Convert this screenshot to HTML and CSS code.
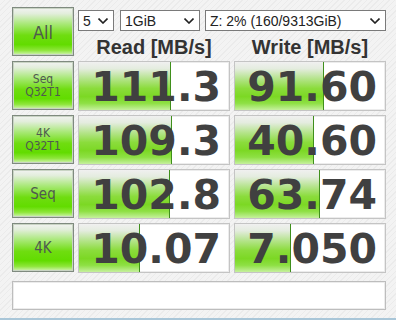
FILE: index.html
```html
<!DOCTYPE html>
<html>
<head>
<meta charset="utf-8">
<link rel="stylesheet" href="styles.css">
</head>
<body>
<div class="app">
  <div class="grid">
    <div class="btn btn-all">All</div>
    <div class="top">
      <div class="selects">
        <div class="sel sel-n"><span>5</span><svg class="chev" width="10" height="6" viewBox="0 0 10 6"><path d="M0.5 0.5 L5 5 L9.5 0.5" fill="none" stroke="#222" stroke-width="1.6"/></svg></div>
        <div class="sel sel-s"><span>1GiB</span><svg class="chev" width="10" height="6" viewBox="0 0 10 6"><path d="M0.5 0.5 L5 5 L9.5 0.5" fill="none" stroke="#222" stroke-width="1.6"/></svg></div>
        <div class="sel sel-d"><span>Z: 2% (160/9313GiB)</span><svg class="chev" width="10" height="6" viewBox="0 0 10 6"><path d="M0.5 0.5 L5 5 L9.5 0.5" fill="none" stroke="#222" stroke-width="1.6"/></svg></div>
      </div>
      <div class="heads">
        <div class="head">Read [MB/s]</div>
        <div class="head">Write [MB/s]</div>
      </div>
    </div>

    <div class="btn"><span>Seq</span><span>Q32T1</span></div>
    <div class="cell"><div class="bar" style="width:91px"></div><span class="val">111.3</span></div>
    <div class="cell"><div class="bar" style="width:88px"></div><span class="val">91.60</span></div>

    <div class="btn"><span>4K</span><span>Q32T1</span></div>
    <div class="cell"><div class="bar" style="width:92px"></div><span class="val">109.3</span></div>
    <div class="cell"><div class="bar" style="width:78px"></div><span class="val">40.60</span></div>

    <div class="btn btn-seq"><span>Seq</span></div>
    <div class="cell"><div class="bar" style="width:90px"></div><span class="val">102.8</span></div>
    <div class="cell"><div class="bar" style="width:84px"></div><span class="val">63.74</span></div>

    <div class="btn btn-4k"><span>4K</span></div>
    <div class="cell"><div class="bar" style="width:60px"></div><span class="val">10.07</span></div>
    <div class="cell"><div class="bar" style="width:55px"></div><span class="val">7.050</span></div>
  </div>
  <div class="comment"></div>
</div>
<div class="edge"></div>
</body>
</html>
```
FILE: styles.css
```css
html, body {
  margin: 0;
  padding: 0;
}
body {
  width: 396px;
  height: 320px;
  overflow: hidden;
  background-color: #f1f1f1;
  background-image: repeating-linear-gradient(135deg, #f3f3f3 0px, #f3f3f3 3px, #ebebeb 3px, #ebebeb 4px);
  display: flex;
  flex-direction: column;
}
.app {
  padding: 7px 10px 0 12px;
  flex: 1;
}
.grid {
  display: grid;
  grid-template-columns: 62px 152px 152px;
  grid-template-rows: repeat(5, 50px);
  column-gap: 4px;
  row-gap: 4px;
}
.btn {
  box-sizing: border-box;
  height: 49px;
  border: 1px solid #7f8a7f;
  box-shadow: inset 0 0 0 1px #c9d4c4;
  background: linear-gradient(to bottom, #f2f2f2 0%, #e2eedb 12%, #a6e873 35%, #6fdd10 58%, #62dc00 78%, #8ee63a 90%, #d4f4b8 100%);
  display: flex;
  flex-direction: column;
  align-items: center;
  justify-content: center;
  font-family: "Liberation Sans Narrow", "DejaVu Sans Condensed", sans-serif;
  font-size: 12px;
  line-height: 13px;
  color: #4f5a4f;
}
.btn-all {
  font-size: 18px;
  line-height: 20px;
  padding-top: 2px;
}
.btn-seq span, .btn-4k span {
  font-size: 15px;
  line-height: 16px;
}
.top {
  grid-column: 2 / 4;
  display: flex;
  flex-direction: column;
  justify-content: space-between;
  padding-top: 3px;
}
.selects {
  display: flex;
  gap: 6px;
}
.sel {
  box-sizing: border-box;
  height: 21px;
  border: 1px solid #7a7a7a;
  background: #fff;
  display: flex;
  align-items: center;
  justify-content: space-between;
  padding: 0 4px 0 4px;
  font-family: "Liberation Sans", Arial, sans-serif;
  font-size: 14px;
  color: #222;
}
.sel-n { width: 36px; }
.sel-s { width: 80px; }
.sel-d { width: 181px; margin-left: -1px; }
.chev { flex: none; margin-right: 1px; margin-top: 1px; }
.heads {
  display: grid;
  grid-template-columns: 152px 152px;
  column-gap: 4px;
}
.head {
  text-align: center;
  font-family: "Liberation Sans", Arial, sans-serif;
  font-weight: bold;
  font-size: 20px;
  line-height: 22px;
  color: #333;
  margin-bottom: -1px;
}
.cell {
  position: relative;
  box-sizing: border-box;
  height: 50px;
  border: 1px solid #c4c4c4;
  box-shadow: inset 0 0 0 1px #ececec;
  background: #fff;
  text-align: right;
  padding: 2px 8px 0 0;
  overflow: hidden;
}
.bar {
  position: absolute;
  left: 0;
  top: 0;
  bottom: 0;
  border-right: 1px solid #3f8f1c;
  background: linear-gradient(to bottom, #f0f0f0 0%, #e4ecdf 14%, #b6e48e 34%, #8bdc3c 55%, #7cd824 72%, #8ee044 86%, #c6f09e 100%);
}
.val {
  position: relative;
  font-family: "DejaVu Sans", Verdana, sans-serif;
  font-weight: bold;
  font-size: 41px;
  line-height: 46px;
  color: #404040;
}
.comment {
  box-sizing: border-box;
  margin-top: 8px;
  width: 374px;
  height: 29px;
  border: 1px solid #bdbdbd;
  box-shadow: inset 0 0 0 1px #ececec;
  background: #fff;
}
.edge {
  height: 2px;
  background: #a9c6d8;
}
```
